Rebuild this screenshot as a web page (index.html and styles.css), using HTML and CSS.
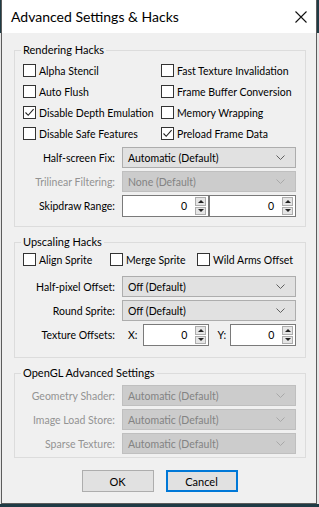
FILE: index.html
```html
<!DOCTYPE html>
<html lang="en">
<head>
  <meta charset="UTF-8">
  <title>Advanced Settings &amp; Hacks</title>
  <link rel="stylesheet" href="styles.css">
</head>
<body>

<div class="window">
  <div class="titlebar">
    <span class="title">Advanced Settings &amp; Hacks</span>
    <svg class="close" width="12" height="12" viewBox="0 0 12 12">
      <path d="M0.5 0.5 L11.5 11.5 M11.5 0.5 L0.5 11.5" stroke="#111" stroke-width="1.1" fill="none"/>
    </svg>
  </div>

  <div class="content">

    <fieldset class="group">
      <legend>Rendering Hacks</legend>
      <div class="checks cols-2">
        <label class="check"><span class="box"></span>Alpha Stencil</label>
        <label class="check"><span class="box"></span>Fast Texture Invalidation</label>
        <label class="check"><span class="box"></span>Auto Flush</label>
        <label class="check"><span class="box"></span>Frame Buffer Conversion</label>
        <label class="check"><span class="box checked"><svg width="11" height="11" viewBox="0 0 11 11"><path d="M1.5 5.5 L4.2 8.3 L9.6 2.2" stroke="#222" stroke-width="1.1" fill="none"/></svg></span>Disable Depth Emulation</label>
        <label class="check"><span class="box"></span>Memory Wrapping</label>
        <label class="check"><span class="box"></span>Disable Safe Features</label>
        <label class="check"><span class="box checked"><svg width="11" height="11" viewBox="0 0 11 11"><path d="M1.5 5.5 L4.2 8.3 L9.6 2.2" stroke="#222" stroke-width="1.1" fill="none"/></svg></span>Preload Frame Data</label>
      </div>
      <div class="form form-1">
        <span class="lbl">Half-screen Fix:</span>
        <div class="combo">Automatic (Default)<svg class="arrow" width="9" height="5" viewBox="0 0 9 5"><path d="M0.5 0.5 L4.5 4.5 L8.5 0.5" stroke="#606060" fill="none"/></svg></div>

        <span class="lbl disabled">Trilinear Filtering:</span>
        <div class="combo off">None (Default)<svg class="arrow" width="9" height="5" viewBox="0 0 9 5"><path d="M0.5 0.5 L4.5 4.5 L8.5 0.5" stroke="#a8a8a8" fill="none"/></svg></div>

        <span class="lbl">Skipdraw Range:</span>
        <div class="spins">
          <div class="spin"><span class="val">0</span><span class="arrows"><span class="up"></span><span class="down"></span></span></div>
          <div class="spin"><span class="val">0</span><span class="arrows"><span class="up"></span><span class="down"></span></span></div>
        </div>
      </div>
    </fieldset>

    <fieldset class="group">
      <legend>Upscaling Hacks</legend>
      <div class="checks cols-3">
        <label class="check"><span class="box"></span>Align Sprite</label>
        <label class="check"><span class="box"></span>Merge Sprite</label>
        <label class="check"><span class="box"></span>Wild Arms Offset</label>
      </div>
      <div class="form form-2">
        <span class="lbl">Half-pixel Offset:</span>
        <div class="combo">Off (Default)<svg class="arrow" width="9" height="5" viewBox="0 0 9 5"><path d="M0.5 0.5 L4.5 4.5 L8.5 0.5" stroke="#606060" fill="none"/></svg></div>

        <span class="lbl">Round Sprite:</span>
        <div class="combo">Off (Default)<svg class="arrow" width="9" height="5" viewBox="0 0 9 5"><path d="M0.5 0.5 L4.5 4.5 L8.5 0.5" stroke="#606060" fill="none"/></svg></div>

        <span class="lbl">Texture Offsets:</span>
        <div class="offsets">
          <span class="axis">X:</span>
          <div class="spin"><span class="val">0</span><span class="arrows"><span class="up"></span><span class="down"></span></span></div>
          <span class="axis axis-y">Y:</span>
          <div class="spin"><span class="val">0</span><span class="arrows"><span class="up"></span><span class="down"></span></span></div>
        </div>
      </div>
    </fieldset>

    <fieldset class="group">
      <legend>OpenGL Advanced Settings</legend>
      <div class="form form-3">
        <span class="lbl disabled">Geometry Shader:</span>
        <div class="combo off">Automatic (Default)<svg class="arrow" width="9" height="5" viewBox="0 0 9 5"><path d="M0.5 0.5 L4.5 4.5 L8.5 0.5" stroke="#a8a8a8" fill="none"/></svg></div>

        <span class="lbl disabled">Image Load Store:</span>
        <div class="combo off">Automatic (Default)<svg class="arrow" width="9" height="5" viewBox="0 0 9 5"><path d="M0.5 0.5 L4.5 4.5 L8.5 0.5" stroke="#a8a8a8" fill="none"/></svg></div>

        <span class="lbl disabled">Sparse Texture:</span>
        <div class="combo off">Automatic (Default)<svg class="arrow" width="9" height="5" viewBox="0 0 9 5"><path d="M0.5 0.5 L4.5 4.5 L8.5 0.5" stroke="#a8a8a8" fill="none"/></svg></div>
      </div>
    </fieldset>

    <div class="buttons">
      <button class="btn">OK</button>
      <button class="btn default">Cancel</button>
    </div>

  </div>
</div>

</body>
</html>
```

FILE: styles.css
```css
body {
  margin: 0;
  font-family: 'Lato', 'Liberation Sans', sans-serif;
  font-size: 10.5px;
  color: #000;
  background: linear-gradient(#1f3b45 0, #1f3b45 33px, #e6e6e6 33px);
}
.window {
  width: 314px;
  height: 503px;
  margin-left: 1px;
  background: #f0f0f0;
  border: 1px solid #5c5c5c;
  border-top: none;
  display: flex;
  flex-direction: column;
}
.titlebar {
  height: 33px;
  background: #fff;
  display: flex;
  align-items: center;
  padding: 0 9px 0 9px;
}
.title {
  flex: 1;
  font-size: 14px;
}
.close {
  margin-top: 1px;
}
.content {
  padding: 10px 10px 0 12px;
}
.group {
  margin: 0 0 8px 0;
  padding: 0 9px 0 8px;
  border: 1px solid #dcdcdc;
  min-width: 0;
}
.group legend {
  padding: 0 2px;
  margin-left: -2px;
  line-height: 14px;
  font-size: 11px;
}
.checks {
  display: grid;
  grid-auto-rows: 21px;
  padding-top: 3px;
}
.cols-2 {
  grid-template-columns: 138px 1fr;
}
.cols-3 {
  grid-template-columns: 87px 87px 1fr;
  padding-top: 0;
}
.check {
  display: flex;
  align-items: center;
  white-space: nowrap;
}
.box {
  width: 11px;
  height: 11px;
  border: 1px solid #333;
  background: #fff;
  margin-right: 3px;
  display: flex;
}
.form {
  display: grid;
  grid-template-columns: 92px 1fr;
  column-gap: 7px;
  row-gap: 3px;
  align-items: center;
}
.form-1 {
  margin-top: 3px;
  padding-bottom: 9px;
}
.form-2 {
  margin-top: 6px;
  padding-bottom: 11px;
}
.form-3 {
  margin-top: 5px;
  padding-bottom: 3px;
}
.lbl {
  text-align: right;
  white-space: nowrap;
}
.lbl.disabled {
  color: #939393;
}
.combo {
  height: 19px;
  border: 1px solid #adadad;
  background: #e1e1e1;
  display: flex;
  align-items: center;
  padding: 0 10px 0 5px;
  justify-content: space-between;
}
.combo.off {
  background: #cccccc;
  border-color: #bfbfbf;
  color: #838383;
}
.spins {
  display: flex;
}
.spin {
  flex: 1;
  height: 20px;
  border: 1px solid #7a7a7a;
  background: #fff;
  display: flex;
  align-items: stretch;
}
.val {
  flex: 1;
  text-align: right;
  padding-right: 8px;
  line-height: 20px;
}
.arrows {
  width: 11px;
  display: flex;
  flex-direction: column;
  gap: 1px;
  padding: 1px 2px 1px 0;
}
.arrows span {
  flex: 1;
  border: 1px solid #adadad;
  background: #e5e5e5;
  display: flex;
  align-items: center;
  justify-content: center;
}
.arrows .up::before {
  content: "";
  border-left: 3px solid transparent;
  border-right: 3px solid transparent;
  border-bottom: 3px solid #222;
}
.arrows .down::before {
  content: "";
  border-left: 3px solid transparent;
  border-right: 3px solid transparent;
  border-top: 3px solid #222;
}
.offsets {
  display: flex;
  align-items: center;
}
.offsets .spin {
  flex: none;
  width: 64px;
}
.axis {
  margin: 0 6px 0 6px;
}
.axis-y {
  margin: 0 4px 0 8px;
}
.buttons {
  display: flex;
  justify-content: center;
  gap: 12px;
  margin-top: 12px;
  padding-right: 1px;
}
.btn {
  width: 72px;
  height: 22px;
  font-family: 'Lato', 'Liberation Sans', sans-serif;
  font-size: 11px;
  background: #e1e1e1;
  border: 1px solid #adadad;
  padding: 0;
}
.btn.default {
  border: 2px solid #0078d7;
}
```
